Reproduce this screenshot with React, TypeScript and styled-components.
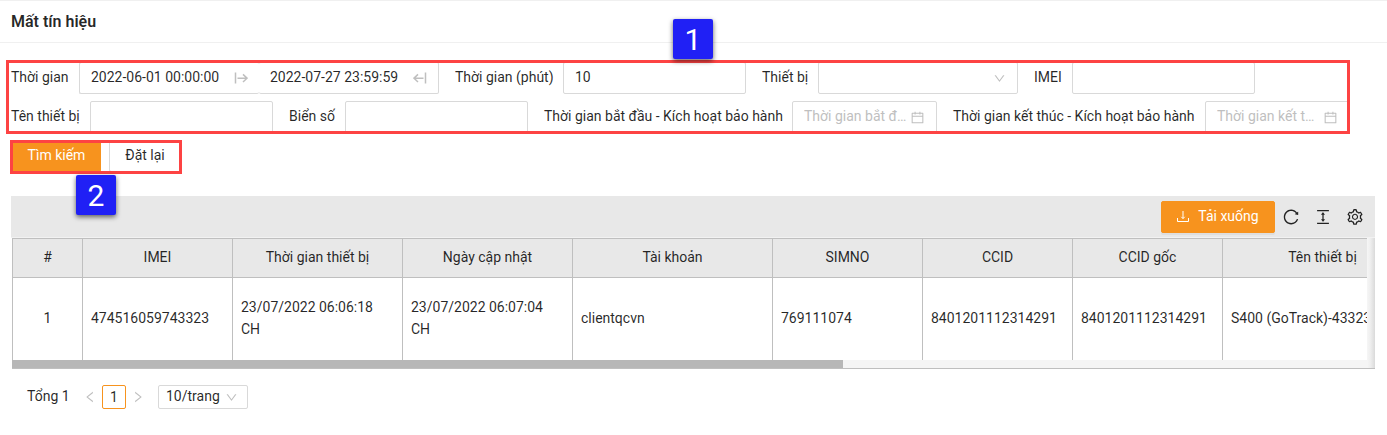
import React from "react";
import styled, { createGlobalStyle } from "styled-components";
import {
  AiOutlineCalendar,
  AiOutlineColumnHeight,
  AiOutlineDown,
  AiOutlineLeft,
  AiOutlineReload,
  AiOutlineRight,
  AiOutlineSetting,
} from "react-icons/ai";

const GlobalStyle = createGlobalStyle`
  *, *::before, *::after { box-sizing: border-box; }
  body {
    margin: 0;
    background: #fff;
    color: rgba(0, 0, 0, 0.85);
    font: 14px/22px Roboto, "Liberation Sans", sans-serif;
    overflow: hidden;
  }
`;

const Page = styled.div`
  height: 435px;
  display: flex;
  flex-direction: column;
`;

const Header = styled.header`
  height: 43px;
  flex: none;
  display: flex;
  align-items: center;
  padding: 0 11px;
  border-top: 1px solid #f0f0f0;
  border-bottom: 1px solid #f0f0f0;
`;

const Title = styled.h1`
  margin: 0;
  font-size: 16px;
  font-weight: 600;
  line-height: 24px;
`;

const Search = styled.section`
  position: relative;
  flex: none;
  height: 153px;
  padding: 19px 0 0 11px;
  display: flex;
  flex-direction: column;
  gap: 7px;
`;

const Row = styled.div`
  display: flex;
  height: 32px;
`;

const Field = styled.div`
  display: flex;
  flex: none;
  margin-right: 16px;
`;

const Label = styled.label<{ $w: number }>`
  width: ${(p) => p.$w}px;
  line-height: 30px;
  white-space: nowrap;
`;

const Control = styled.div<{ $w: number; $muted?: boolean }>`
  width: ${(p) => p.$w}px;
  height: 32px;
  display: flex;
  align-items: center;
  justify-content: space-between;
  gap: 2px;
  padding: 0 11px;
  border: 1px solid #d9d9d9;
  border-radius: 2px;
  line-height: 28px;
  white-space: nowrap;
  color: ${(p) => (p.$muted ? "#bfbfbf" : "inherit")};

  svg { flex: none; color: #bfbfbf; }
`;

const RangeStart = styled(Control)`
  border-right: 0;
`;

const RangeEnd = styled(Control)`
  border-left: 0;
`;

const Value = styled.span`
  height: 30px;
  overflow: hidden;
  text-overflow: ellipsis;
`;

const Button = styled.button<{ $primary?: boolean; $w: number }>`
  width: ${(p) => p.$w}px;
  height: 32px;
  padding: 0 0 2px;
  display: flex;
  align-items: center;
  justify-content: center;
  gap: 9px;
  border: 1px solid ${(p) => (p.$primary ? "#f7931e" : "#d9d9d9")};
  border-radius: 2px;
  background: ${(p) => (p.$primary ? "#f7931e" : "#fff")};
  color: ${(p) => (p.$primary ? "#fff" : "rgba(0,0,0,0.85)")};
  box-shadow: 0 2px 0 rgba(0, 0, 0, ${(p) => (p.$primary ? 0.045 : 0.015)});
  font: inherit;
  font-size: 14px;
`;

const Actions = styled(Row)`
  gap: 8px;
  padding-left: 1px;
`;

const Frame = styled.div<{ $x: number; $y: number; $w: number; $h: number }>`
  position: absolute;
  left: ${(p) => p.$x}px;
  top: ${(p) => p.$y}px;
  width: ${(p) => p.$w}px;
  height: ${(p) => p.$h}px;
  border: 3px solid #fd4343;
  box-shadow: 0 2px 0 #fff;
`;

const Callout = styled.div<{ $x: number; $y: number }>`
  position: absolute;
  z-index: 2;
  left: ${(p) => p.$x}px;
  top: ${(p) => p.$y}px;
  width: 40px;
  height: 40px;
  border-radius: 2px;
  background: #2020f5;
  box-shadow: 0 2px 5px rgba(0, 0, 0, 0.6);
  color: #fff;
  font: 30px/42px Roboto, "Liberation Sans", sans-serif;
  text-align: center;
`;

const Panel = styled.section`
  width: 1364px;
  margin-left: 11px;
`;

const Toolbar = styled.div`
  height: 42px;
  display: flex;
  align-items: center;
  justify-content: flex-end;
  gap: 14px;
  padding-right: 11px;
  background: #e8e8e8;
  border-bottom: 1px solid #f2f2f2;

  button { margin-right: -7px; }
`;

const TableBox = styled.div`
  display: flex;
  height: 131px;
  margin-left: 1px;
  border-bottom: 1px solid #bfbfbf;
`;

const TableScroll = styled.div`
  width: 1355px;
  overflow: hidden;
`;

const Gutter = styled.div`
  width: 8px;
  background: linear-gradient(to right, #f6f6f6, #efefef 40%, #dadada);
`;

const TableRow = styled.div<{ $h: number; $head?: boolean }>`
  display: grid;
  grid-template-columns: 70px 150px 170px 170px 200px 150px 150px 150px 200px;
  height: ${(p) => p.$h}px;
  background: ${(p) => (p.$head ? "#e8e8e8" : "#fff")};
  border-top: ${(p) => (p.$head ? "1px solid #bfbfbf" : "0")};
  border-bottom: ${(p) => (p.$head ? "1px solid #bfbfbf" : "0")};
`;

const Cell = styled.div<{ $center?: boolean }>`
  display: flex;
  align-items: center;
  justify-content: ${(p) => (p.$center ? "center" : "flex-start")};
  padding: 0 8px 2px;
  border-left: 1px solid #bfbfbf;
`;

const Track = styled.div`
  height: 8px;
  background: #f5f5f5;
`;

const Thumb = styled.div`
  width: 831px;
  height: 8px;
  background: #b7b7b7;
`;

const Pagination = styled.nav`
  display: flex;
  align-items: center;
  height: 24px;
  margin: 16px 0 0 27px;

  svg { flex: none; color: #bfbfbf; }
`;

const Total = styled.span`
  width: 56px;
  height: 24px;
`;

const PageNumber = styled.span`
  width: 24px;
  height: 24px;
  margin: 0 5px;
  border: 1px solid #f7931e;
  border-radius: 2px;
  line-height: 23px;
  text-align: center;
`;

const SizeSelect = styled.div`
  display: flex;
  align-items: center;
  justify-content: space-between;
  width: 90px;
  height: 24px;
  margin-left: 13px;
  padding: 0 9px 0 7px;
  border: 1px solid #d9d9d9;
  border-radius: 2px;

  span { height: 24px; }
`;

const RangeIcon = ({ end }: { end?: boolean }) => (
  <svg width="14" height="12" viewBox="0 0 14 12" fill="none" stroke="currentColor" strokeWidth="1.5">
    <g transform={end ? "translate(14 0) scale(-1 1)" : undefined}>
      <path d="M1.5 0.5v11" />
      <path d="M3.5 6.2h9M9 2.4l4 3.8-4 3.8" />
    </g>
  </svg>
);

const DownloadIcon = () => (
  <svg width="12" height="12" viewBox="0 0 12 12" fill="none" stroke="currentColor">
    <path d="M0.5 8v3.5h11V8M6 1v7.5M4.3 6.8L6 8.6l1.7-1.8" />
  </svg>
);

const columns = ["#", "IMEI", "Thời gian thiết bị", "Ngày cập nhật", "Tài khoản", "SIMNO", "CCID", "CCID gốc", "Tên thiết bị"];
const record = [
  "1",
  "474516059743323",
  "23/07/2022 06:06:18 CH",
  "23/07/2022 06:07:04 CH",
  "clientqcvn",
  "769111074",
  "8401201112314291",
  "8401201112314291",
  "S400 (GoTrack)-43323",
];

export default function App() {
  return (
    <>
      <GlobalStyle />
      <Page>
        <Header>
          <Title>Mất tín hiệu</Title>
        </Header>
        <Search>
          <Row>
            <Field>
              <Label $w={68}>Thời gian</Label>
              <RangeStart $w={180}>
                <Value>2022-06-01 00:00:00</Value>
                <RangeIcon />
              </RangeStart>
              <RangeEnd $w={180}>
                <Value>2022-07-27 23:59:59</Value>
                <RangeIcon end />
              </RangeEnd>
            </Field>
            <Field>
              <Label $w={108}>Thời gian (phút)</Label>
              <Control $w={183}><Value>10</Value></Control>
            </Field>
            <Field>
              <Label $w={56}>Thiết bị</Label>
              <Control $w={200}><span /><AiOutlineDown size={13} /></Control>
            </Field>
            <Field>
              <Label $w={38}>IMEI</Label>
              <Control $w={183} />
            </Field>
          </Row>
          <Row>
            <Field>
              <Label $w={79}>Tên thiết bị</Label>
              <Control $w={183} />
            </Field>
            <Field>
              <Label $w={56}>Biển số</Label>
              <Control $w={183} />
            </Field>
            <Field>
              <Label $w={248}>Thời gian bắt đầu - Kích hoạt bảo hành</Label>
              <Control $w={145} $muted>
                <Value>Thời gian bắt đầu</Value>
                <AiOutlineCalendar size={15} />
              </Control>
            </Field>
            <Field>
              <Label $w={252}>Thời gian kết thúc - Kích hoạt bảo hành</Label>
              <Control $w={145} $muted>
                <Value>Thời gian kết thúc</Value>
                <AiOutlineCalendar size={15} />
              </Control>
            </Field>
          </Row>
          <Actions>
            <Button $primary $w={89}>Tìm kiếm</Button>
            <Button $w={72}>Đặt lại</Button>
          </Actions>
          <Frame $x={6} $y={17} $w={1344} $h={74} />
          <Frame $x={10} $y={97} $w={172} $h={34} />
          <Callout $x={673} $y={-24}>1</Callout>
          <Callout $x={76} $y={132}>2</Callout>
        </Search>
        <Panel>
          <Toolbar>
            <Button $primary $w={114}>
              <DownloadIcon />
              Tải xuống
            </Button>
            <AiOutlineReload size={18} />
            <AiOutlineColumnHeight size={18} />
            <AiOutlineSetting size={18} />
          </Toolbar>
          <TableBox>
            <TableScroll>
              <TableRow $h={40} $head>
                {columns.map((c) => <Cell key={c} $center>{c}</Cell>)}
              </TableRow>
              <TableRow $h={82}>
                {record.map((v, i) => <Cell key={i} $center={i === 0}>{v}</Cell>)}
              </TableRow>
              <Track><Thumb /></Track>
            </TableScroll>
            <Gutter />
          </TableBox>
        </Panel>
        <Pagination>
          <Total>Tổng 1</Total>
          <AiOutlineLeft size={14} />
          <PageNumber>1</PageNumber>
          <AiOutlineRight size={14} />
          <SizeSelect>
            <span>10/trang</span>
            <AiOutlineDown size={13} />
          </SizeSelect>
        </Pagination>
      </Page>
    </>
  );
}
